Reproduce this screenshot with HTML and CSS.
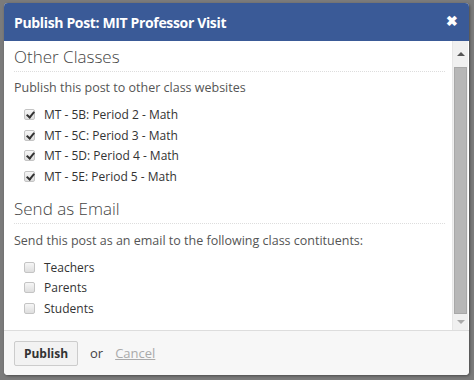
FILE: index.html
```html
<!DOCTYPE html>
<html lang="en">
  <head>
    <title>Publish Post</title>
    <meta charset="utf-8" />
    <link rel="stylesheet" href="styles.css">
  </head>
  <body>
    <div class="modal">
      <div class="modal-header">
        <h1>Publish Post: MIT Professor Visit</h1>
        <span class="close">&#10006;</span>
      </div>

      <div class="modal-body">
        <div class="content">
          <h2>Other Classes</h2>
          <p class="first">Publish this post to other class websites</p>
          <ul class="options">
            <li><input type="checkbox" checked /> MT - 5B: Period 2 - Math</li>
            <li><input type="checkbox" checked /> MT - 5C: Period 3 - Math</li>
            <li><input type="checkbox" checked /> MT - 5D: Period 4 - Math</li>
            <li><input type="checkbox" checked /> MT - 5E: Period 5 - Math</li>
          </ul>

          <h2>Send as Email</h2>
          <p>Send this post as an email to the following class contituents:</p>
          <ul class="options">
            <li><input type="checkbox" /> Teachers</li>
            <li><input type="checkbox" /> Parents</li>
            <li><input type="checkbox" /> Students</li>
          </ul>
        </div>
        <div class="scrollbar">
          <span class="arrow up"></span>
          <span class="thumb"></span>
          <span class="arrow down"></span>
        </div>
      </div>

      <div class="modal-footer">
        <button class="btn">Publish</button>
        <span class="or">or</span>
        <a class="cancel" href="#">Cancel</a>
      </div>
    </div>
  </body>
</html>
```

FILE: styles.css
```css
body {
  margin: 0;
  padding: 3px 5px 5px 4px;
  background-color: #7b7b7b;
  font-family: "Open Sans", sans-serif;
  color: #555;
}

.modal {
  display: flex;
  flex-direction: column;
  height: 372px;
  background: #fff;
  border-radius: 4px;
  overflow: hidden;
  box-shadow: 1px 1px 3px rgba(0, 0, 0, 0.4);
}

.modal-header {
  display: flex;
  align-items: center;
  justify-content: space-between;
  height: 38px;
  padding: 0 11px 0 10px;
  background-color: #3a5a97;
  color: #fff;
}

.modal-header h1 {
  margin: 0;
  font-size: 14px;
  font-weight: 700;
  letter-spacing: -0.35px;
}

.close {
  font-size: 14px;
  font-weight: 700;
  margin-top: -3px;
}

.modal-body {
  display: flex;
  height: 289px;
}

.content {
  flex: 1;
  padding: 4px 7px 0 10px;
}

h2 {
  margin: 0;
  padding-bottom: 3px;
  font-size: 17px;
  font-weight: 300;
  color: #444;
  border-bottom: 1px dotted #ddd;
}

p {
  margin: 8px 0 8px;
  font-size: 12.5px;
  line-height: 17px;
  color: #555;
}

p.first {
  margin-top: 7px;
}

.options {
  list-style: none;
  margin: 1px 0 10px;
  padding: 0 0 0 10px;
}

.options li {
  display: flex;
  align-items: center;
  gap: 9px;
  height: 20.7px;
  font-size: 12px;
  color: #333;
}

input[type="checkbox"] {
  appearance: none;
  position: relative;
  margin: 0;
  width: 11px;
  height: 11px;
  border: 1px solid #c4c4c4;
  border-radius: 2px;
  background: linear-gradient(#f6f6f6, #dedede);
}

input[type="checkbox"]:checked::after {
  content: "";
  position: absolute;
  left: 3px;
  top: 0;
  width: 3px;
  height: 6px;
  border: solid #333;
  border-width: 0 2px 2px 0;
  transform: rotate(40deg);
}

.scrollbar {
  display: flex;
  flex-direction: column;
  align-items: center;
  width: 15px;
  margin-right: 1px;
  background: #f0f0f0;
  border-left: 1px solid #e6e6e6;
}

.arrow {
  height: 26px;
  width: 100%;
  display: flex;
  align-items: center;
  justify-content: center;
}

.arrow.up::after {
  content: "";
  border: 4px solid transparent;
  border-bottom: 4px solid #555;
  border-top-width: 0;
}

.arrow.down {
  height: 16px;
}

.arrow.down::after {
  content: "";
  border: 4px solid transparent;
  border-top: 4px solid #aaa;
  border-bottom-width: 0;
}

.thumb {
  flex: 1;
  width: 11px;
  background: #b7b7b7;
  border: 1px solid #a8a8a8;
}

.modal-footer {
  display: flex;
  align-items: center;
  height: 45px;
  padding: 0 10px;
  background: #f7f7f7;
  border-top: 1px solid #ddd;
  box-sizing: border-box;
  font-size: 13px;
}

.btn {
  width: 64px;
  height: 25px;
  padding: 0;
  font-family: "Open Sans", sans-serif;
  font-size: 12px;
  font-weight: 700;
  color: #333;
  background: #f2f2f2;
  border: 1px solid #ccc;
  border-radius: 2px;
}

.or {
  margin-left: 12px;
  color: #444;
}

.cancel {
  margin-left: 12px;
  color: #aaa;
}
```
